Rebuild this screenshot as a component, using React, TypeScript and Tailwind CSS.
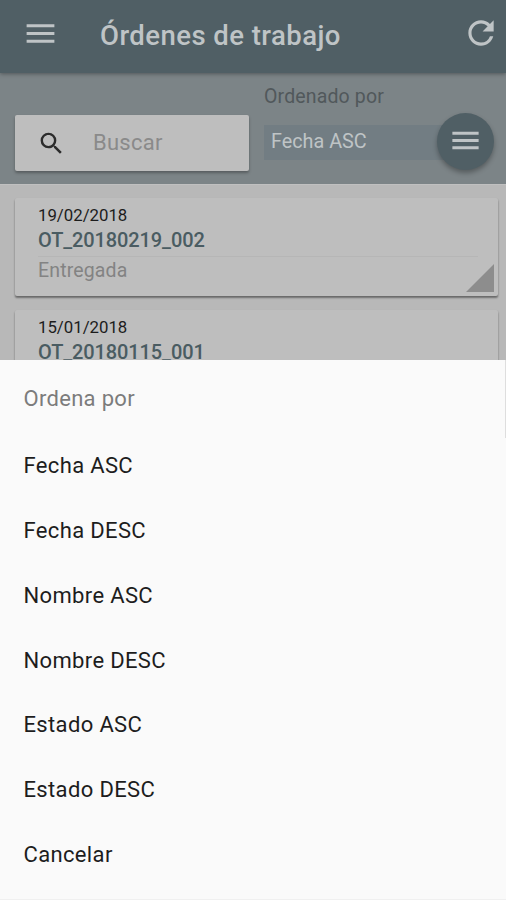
import { useState } from "react";
import { MdMenu, MdRefresh, MdSearch } from "react-icons/md";

type Order = {
  date: string;
  code: string;
  status?: string;
};

const ORDERS: Order[] = [
  { date: "19/02/2018", code: "OT_20180219_002", status: "Entregada" },
  { date: "15/01/2018", code: "OT_20180115_001" },
];

const SORT_OPTIONS = [
  "Fecha ASC",
  "Fecha DESC",
  "Nombre ASC",
  "Nombre DESC",
  "Estado ASC",
  "Estado DESC",
];

function OrderCard({ order }: { order: Order }) {
  return (
    <article className="relative h-[98px] shrink-0 rounded-xs bg-[#bebebe] pl-[23px] pr-5 pt-[7px] shadow-[0_2px_2px_rgba(0,0,0,0.38),0_1px_2px_rgba(0,0,0,0.1)]">
      <p className="text-[16.8px] leading-5 text-[#1c1c1c]">{order.date}</p>
      <p className="mt-0.5 h-[30px] border-b border-[#b6b6b6] text-[20px] leading-[26px] tracking-[-0.12px] font-medium text-[#4a5c62]">
        {order.code}
      </p>
      {order.status && (
        <p className="text-[19.5px] leading-[27px] tracking-[0.15px] text-[#838383]">{order.status}</p>
      )}
      <svg viewBox="0 0 28 28" className="absolute bottom-1 right-1 size-7 fill-[#8d8d8d]">
        <path d="M28 0v28H0z" />
      </svg>
    </article>
  );
}

export default function App() {
  const [sort, setSort] = useState("Fecha ASC");
  const [sheetOpen, setSheetOpen] = useState(true);

  const choose = (option: string) => {
    setSort(option);
    setSheetOpen(false);
  };

  return (
    <div className="relative flex h-[900px] w-[506px] flex-col overflow-hidden bg-[#b8b8b8] font-[Roboto,sans-serif]">
      {/* App bar */}
      <header className="z-10 flex h-[73px] shrink-0 items-center bg-[#505f65] pl-[22px] pr-1.5 text-[#bfc4c6] shadow-[0_1px_4px_rgba(0,0,0,0.35)]">
        <button aria-label="Menú" className="-mt-1.5">
          <MdMenu className="size-[37px]" />
        </button>
        <h1 className="-mt-0.5 ml-[41px] flex-1 text-[27.5px] leading-8 tracking-[0.45px] font-medium">
          Órdenes de trabajo
        </h1>
        <button aria-label="Actualizar" className="-mt-[7px]">
          <MdRefresh className="size-[38px]" />
        </button>
      </header>

      {/* Search and sort */}
      <section className="flex h-[112px] shrink-0 border-b border-[#c0c0c0] bg-[#7c8487] pl-[15px] pr-3">
        <label className="mt-[42px] flex h-14 w-[234px] items-center rounded-xs bg-[#bebebe] pl-[22px] shadow-[0_2px_3px_rgba(0,0,0,0.3)]">
          <MdSearch className="size-[29px] text-[#2c2c2c]" />
          <input
            placeholder="Buscar"
            className="-mt-0.5 ml-[27px] w-32 text-[22px] tracking-[0.25px] outline-none placeholder:text-[#8a8a8a]"
          />
        </label>
        <div className="ml-[15px] flex-1">
          <p className="mt-[11px] text-[19.5px] leading-[26px] tracking-[0.15px] text-[#51585b]">Ordenado por</p>
          <div className="mt-[3px] flex h-14 items-center">
            <div className="-mr-5 mt-[3px] h-[35px] flex-1 bg-[#727d83] pl-[7px] text-[19.8px] leading-[33px] text-[#bfc4c6]">
              {sort}
            </div>
            <button
              aria-label="Ordenar"
              onClick={() => setSheetOpen(true)}
              className="z-10 flex size-[57px] items-center justify-center rounded-full bg-[#505f65] text-[#bfc4c6] shadow-[0_3px_5px_rgba(0,0,0,0.3)]"
            >
              <MdMenu className="-mt-0.5 size-[35px]" />
            </button>
          </div>
        </div>
      </section>

      <main className="flex flex-col gap-3.5 pl-[15px] pr-2 pt-[13px]">
        {ORDERS.map((order) => (
          <OrderCard key={order.code} order={order} />
        ))}
      </main>

      {/* Sort sheet */}
      {sheetOpen && (
        <div className="absolute inset-x-0 bottom-0 z-20 flex h-[540px] flex-col border-b border-[#f0f0f0] bg-[#fafafa] text-[22px] tracking-[0.35px] text-[#1d1d1d]">
          <h2 className="h-[73.5px] shrink-0 px-[23.5px] leading-[77px] tracking-[0.3px] text-[#7c7c7c]">Ordena por</h2>
          {[...SORT_OPTIONS, "Cancelar"].map((option) => (
            <button
              key={option}
              onClick={() => (option === "Cancelar" ? setSheetOpen(false) : choose(option))}
              className="h-[64.75px] shrink-0 px-[23.5px] text-left"
            >
              {option}
            </button>
          ))}
          <div className="absolute right-0 top-0 h-[78px] w-px bg-[#dedede]" />
        </div>
      )}
    </div>
  );
}
